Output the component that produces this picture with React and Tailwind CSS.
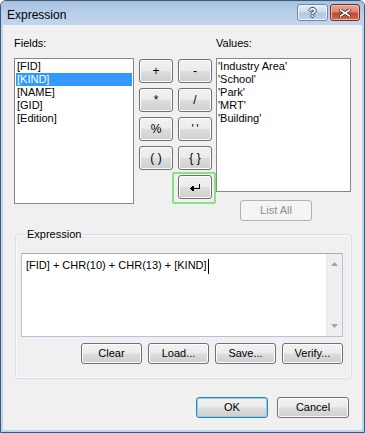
import clsx from "clsx";

const fields = ["[FID]", "[KIND]", "[NAME]", "[GID]", "[Edition]"];
const values = ["'Industry Area'", "'School'", "'Park'", "'MRT'", "'Building'"];
const ops = ["+", "-", "*", "/", "%", "'\u2009'", "( )", "{ }"];

function WinButton({ children, className, variant = "normal" }) {
  return (
    <button
      type="button"
      className={clsx(
        "flex items-center justify-center rounded-[3px] border text-[11px] font-normal leading-none",
        variant === "normal" &&
          "border-[#707070] bg-[linear-gradient(#f2f2f2_0%,#ebebeb_48%,#dddddd_52%,#cfcfcf_100%)] text-black shadow-[inset_0_0_0_1px_#fcfcfc]",
        variant === "default" &&
          "border-[#3c7fb1] bg-[linear-gradient(#f2f2f2_0%,#ebebeb_48%,#dddddd_52%,#cfcfcf_100%)] text-black shadow-[inset_0_0_0_1px_#80d6f6]",
        variant === "disabled" && "border-[#adb2b5] bg-[#f4f4f4] text-[#8d8d8d]",
        className
      )}
    >
      {children}
    </button>
  );
}

function EnterIcon() {
  return (
    <svg width="10" height="7" viewBox="0 0 10 7" shapeRendering="crispEdges">
      <path d="M9 0 V4 H3" fill="none" stroke="#000" strokeWidth="1" />
      <path d="M0 4.5 L3.5 1.5 L3.5 7.5 Z" fill="#000" />
    </svg>
  );
}

export default function App() {
  return (
    <div className="h-[433px] w-[365px] bg-white font-['Liberation_Sans',Arial,sans-serif]">
      <div className="flex h-full flex-col rounded-t-[6px] border border-[#3e5878] bg-[#bcd3eb]">
        {/* Title bar */}
        <div className="flex h-[24px] items-start rounded-t-[5px] bg-[linear-gradient(#a7c2e0,#bad1ea_60%,#c1d6ec)] pl-[6px] pr-[4px]">
          <span className="mt-[7px] text-[12px] leading-[14px] text-black">Expression</span>
          <div className="ml-auto mt-[3px] flex gap-[2px]">
            <div className="flex h-[17px] w-[31px] items-center justify-center rounded-[3px] border border-[#6f88a8] bg-[linear-gradient(#e3edf8_0%,#cbdcee_48%,#aec6e2_52%,#bcd4ec_100%)] shadow-[inset_0_0_0_1px_#eef4fb]">
              <span className="text-[13px] font-bold leading-none text-white [text-shadow:1px_0_#3a4a63,-1px_0_#3a4a63,0_1px_#3a4a63,0_-1px_#3a4a63]">
                ?
              </span>
            </div>
            <div className="flex h-[17px] w-[30px] items-center justify-center rounded-[3px] border border-[#7a2a1e] bg-[linear-gradient(#e9a99c_0%,#d9826f_48%,#c4462c_52%,#d06a52_100%)] shadow-[inset_0_0_0_1px_#eebcb1]">
              <svg width="12" height="8" viewBox="0 0 12 8">
                <path d="M1.5 1 L10.5 7 M10.5 1 L1.5 7" stroke="#3a2320" strokeWidth="3.2" strokeLinecap="square" />
                <path d="M1.5 1 L10.5 7 M10.5 1 L1.5 7" stroke="#fff" strokeWidth="1.6" strokeLinecap="square" />
              </svg>
            </div>
          </div>
        </div>

        {/* Client area */}
        <div className="mx-[2px] mb-[2px] flex flex-1 flex-col bg-[#f0f0f0] pl-[11px] pt-[12px] text-[11px] text-black">
          <div className="flex items-start">
            {/* Fields */}
            <div className="flex w-[120px] flex-col">
              <span className="h-[13px] leading-[13px]">Fields:</span>
              <div className="mt-[8px] h-[146px] border border-[#828790] bg-white p-px">
                {fields.map((f) => (
                  <div
                    key={f}
                    className={clsx(
                      "h-[13px] pl-px leading-[13px]",
                      f === "[KIND]" && "bg-[#3399ff] text-white"
                    )}
                  >
                    {f}
                  </div>
                ))}
              </div>
            </div>

            {/* Operators */}
            <div className="ml-[5px] mt-[22px] grid grid-cols-[34px_34px] auto-rows-[24px] gap-x-[5px] gap-y-[5px]">
              {ops.map((op) => (
                <WinButton key={op} className="text-[12px]">
                  {op}
                </WinButton>
              ))}
              <div className="relative col-start-2">
                <WinButton className="h-full w-full">
                  <EnterIcon />
                </WinButton>
                <div className="pointer-events-none absolute -bottom-[5px] -left-[6px] -right-[4px] -top-[3px] rounded-[2px] border-2 border-[#86e383]" />
              </div>
            </div>

            {/* Values */}
            <div className="ml-[4px] flex w-[135px] flex-col">
              <span className="h-[13px] leading-[13px]">Values:</span>
              <div className="mt-[8px] h-[134px] border border-[#828790] bg-white p-px">
                {values.map((v) => (
                  <div key={v} className="h-[13px] leading-[13px]">
                    {v}
                  </div>
                ))}
              </div>
              <WinButton variant="disabled" className="ml-[24px] mt-[8px] h-[21px] w-[72px]">
                List All
              </WinButton>
            </div>
          </div>

          {/* Expression group */}
          <fieldset className="ml-px mt-[7px] w-[337px] rounded-[3px] border border-[#d5dfe5] px-[5px] pb-[14px] shadow-[inset_0_0_0_1px_#fbfbfb]">
            <legend className="ml-[4px] px-[2px] leading-[13px]">Expression</legend>
            <div className="mt-[12px] flex h-[84px] w-[322px] border border-[#b3c4d6] border-t-[#9aafc4] bg-white">
              <div className="flex flex-1 items-start pl-[4px] pt-[4px]">
                <span className="leading-[15px]">[FID] + CHR(10) + CHR(13) + [KIND]</span>
                <span className="ml-px mt-[1px] h-[15px] w-px bg-black" />
              </div>
              <div className="flex w-[16px] flex-col items-center justify-between border-l border-[#e6e6e6] bg-[#efefef] py-[8px]">
                <svg width="7" height="4" viewBox="0 0 7 4">
                  <path d="M3.5 0 L7 4 L0 4 Z" fill="#a3a3a3" />
                </svg>
                <svg width="7" height="4" viewBox="0 0 7 4">
                  <path d="M0 0 L7 0 L3.5 4 Z" fill="#a3a3a3" />
                </svg>
              </div>
            </div>
            <div className="mt-[6px] flex w-[322px] justify-end gap-[6px]">
              <WinButton className="h-[21px] w-[61px]">Clear</WinButton>
              <WinButton className="h-[21px] w-[61px]">Load...</WinButton>
              <WinButton className="h-[21px] w-[61px]">Save...</WinButton>
              <WinButton className="h-[21px] w-[61px]">Verify...</WinButton>
            </div>
          </fieldset>

          {/* Dialog buttons */}
          <div className="mt-[18px] flex justify-end gap-[9px] pr-[13px]">
            <WinButton variant="default" className="h-[21px] w-[72px]">
              OK
            </WinButton>
            <WinButton className="h-[21px] w-[72px]">Cancel</WinButton>
          </div>
        </div>
      </div>
    </div>
  );
}
